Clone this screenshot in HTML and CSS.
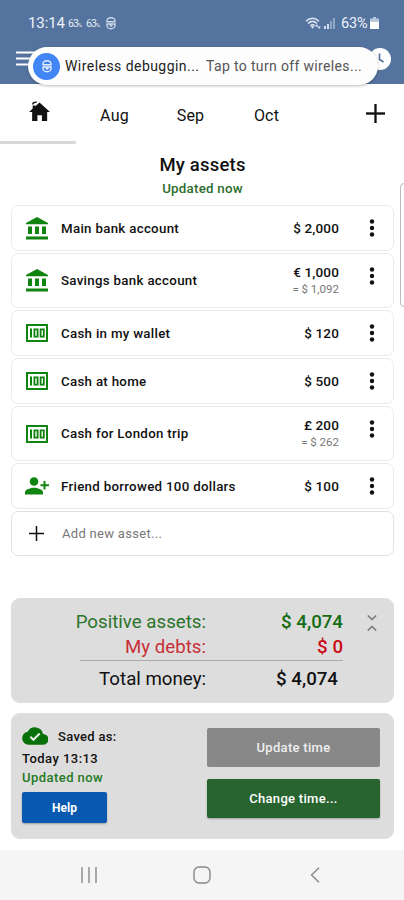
FILE: index.html
```html
<!DOCTYPE html>
<html lang="en">
<head>
<meta charset="utf-8">
<title>My assets</title>
<link rel="stylesheet" href="styles.css">
</head>
<body>
<svg class="defs" aria-hidden="true">
  <symbol id="bank" viewBox="0 0 22 23"><path d="M0 7.200V6L11 0l11 6v1.200zM2 9.500h4v7.500H2zM9 9.500h4v7.500H9zM16 9.500h4v7.500h-4zM0 19.500h22V22.500H0z"/></symbol>
  <symbol id="cash" viewBox="0 0 22 18"><path fill-rule="evenodd" d="M0 0h22v18H0zM2 2v14h18V2zM4 4.500h2v9H4zM7.500 4.500h5v9h-5zM9.300 6.300v5.400h1.400V6.300zM13.700 4.500h5v9h-5zM15.500 6.300v5.400h1.400V6.300z"/></symbol>
  <symbol id="friend" viewBox="0 0 24 18"><circle cx="9" cy="4.500" r="4.300"/><path d="M0 17.500v-2.200c0-3 6-4.600 9-4.600s9 1.600 9 4.600v2.200zM18.500 4h2v3.200H24v2h-3.500v3.300h-2V9.200H15.500v-2h3z"/></symbol>
  <symbol id="dots" viewBox="0 0 6 18"><circle cx="3" cy="2.500" r="2.200"/><circle cx="3" cy="9" r="2.200"/><circle cx="3" cy="15.500" r="2.200"/></symbol>
  <symbol id="plus" viewBox="0 0 20 20"><path d="M9 0h2v9h9v2h-9v9H9v-9H0V9h9z"/></symbol>
  <symbol id="bug" viewBox="0 0 12 14"><path d="M2 5.800V4.800a4 3 0 0 1 8 0v1zM1.500 8H10v1.500a4 3.300 0 0 1-8 0V8M5.500 8v1.800h2" fill="none" stroke="currentColor" stroke-width="1.400"/></symbol>
</svg>

<header class="header">
  <div class="status">
    <span class="clock">13:14</span><span class="tiny">63<small>%</small></span><span class="tiny">63<small>%</small></span>
    <svg class="status-bug"><use href="#bug"/></svg>
    <svg class="wifi" viewBox="0 0 17 13"><g fill="none" stroke="#dce6f2" stroke-width="1.500"><path d="M1 4.200c4-4 9-4 13 0M3 6.500c3-2.800 6-2.800 9 0M5.200 8.700c1.500-1.300 3-1.300 4.600 0"/></g><path d="m5.800 9.800 1.700-1 1.700 1-1.700 2zM10 9.500l1.700-2.500 1.700 2.500zM12.500 9.500h3.400L14.200 12z" fill="#dce6f2"/></svg>
    <svg class="signal" viewBox="0 0 12 11"><path d="M0 8h2v3H0zM3 6h2v5H3z" fill="#d4dfed"/><path d="M6 3h2v8H6zM9 0h2v11H9z" fill="#91a9c8"/></svg>
    <span class="battery-text">63%</span>
    <svg class="battery" viewBox="0 0 9 12"><path d="M3 0h3v1.500h3v3H0v-3h3z" fill="#b7c7dc"/><path d="M0 4.500h9V12H0z" fill="#fff"/></svg>
  </div>
  <svg class="menu" viewBox="0 0 24 15"><path d="M0 1.500h24M0 7.500h24M0 13.500h24" stroke="#fff" stroke-width="1.800"/></svg>
  <svg class="time-icon" viewBox="0 0 22 22"><circle cx="11" cy="11" r="11" fill="#fff"/><path d="M10.500 5.500v6l4 2.500" fill="none" stroke="#54739e" stroke-width="1.700"/></svg>
  <div class="toast">
    <span class="toast-icon"><svg><use href="#bug"/></svg></span>
    <span class="toast-title">Wireless debuggin<i>...</i></span>
    <span class="toast-text">Tap to turn off wireles<i>...</i></span>
  </div>
</header>

<nav class="tabs">
  <div class="tab active"><svg class="home" viewBox="0 0 20 19"><path d="M10 1.500 20 10.500h-2.700V19h-5v-5.500H8V19H3V10.500H0z"/><path d="M3.500 8V4.200H6V6z"/><path d="M3.500 3.200C3.500.800 5.200 2 7.500.700" fill="none" stroke="#111" stroke-width="1.300"/></svg></div>
  <div class="tab">Aug</div>
  <div class="tab">Sep</div>
  <div class="tab">Oct</div>
  <svg class="tab-add"><use href="#plus"/></svg>
</nav>

<main>
  <h1>My assets</h1>
  <p class="updated">Updated now</p>
  <div class="drawer-edge"></div>

  <section class="assets">
    <div class="asset"><svg class="bank"><use href="#bank"/></svg><span class="name">Main bank account</span><span class="value">$ 2,000</span><svg class="dots"><use href="#dots"/></svg></div>
    <div class="asset tall"><svg class="bank"><use href="#bank"/></svg><span class="name">Savings bank account</span><span class="value">€ 1,000<small>= $ 1,092</small></span><svg class="dots"><use href="#dots"/></svg></div>
    <div class="asset"><svg class="cash"><use href="#cash"/></svg><span class="name">Cash in my wallet</span><span class="value">$ 120</span><svg class="dots"><use href="#dots"/></svg></div>
    <div class="asset"><svg class="cash"><use href="#cash"/></svg><span class="name">Cash at home</span><span class="value">$ 500</span><svg class="dots"><use href="#dots"/></svg></div>
    <div class="asset tall"><svg class="cash"><use href="#cash"/></svg><span class="name">Cash for London trip</span><span class="value">£ 200<small>= $ 262</small></span><svg class="dots"><use href="#dots"/></svg></div>
    <div class="asset"><svg class="friend"><use href="#friend"/></svg><span class="name">Friend borrowed 100 dollars</span><span class="value">$ 100</span><svg class="dots"><use href="#dots"/></svg></div>
    <div class="asset add"><svg class="add-icon"><use href="#plus"/></svg><span class="name">Add new asset...</span></div>
  </section>

  <section class="summary">
    <div class="sums">
      <div class="sum positive"><span>Positive assets:</span><b>$ 4,074</b></div>
      <div class="sum debts"><span>My debts:</span><b>$ 0</b></div>
      <div class="sum total"><span>Total money:</span><b>$ 4,074</b></div>
    </div>
    <svg class="collapse" viewBox="0 0 10 18"><path d="m.800 1.500 4.200 4 4.200-4M.800 16.500l4.200-4 4.200 4" fill="none" stroke="#777" stroke-width="1.600"/></svg>
  </section>

  <section class="saved">
    <div class="saved-info">
      <div class="saved-line"><svg viewBox="0 0 25 17"><path d="M20.200 6.500A7.900 7.900 0 0 0 5.500 4.300 6.400 6.400 0 0 0 6.300 17H20a5.200 5.200 0 0 0 .200-10.500z" fill="#087008"/><path d="m8 9.200 3 3 6-6" fill="none" stroke="#e4efe4" stroke-width="2"/></svg><span>Saved as:</span></div>
      <div class="saved-time">Today 13:13</div>
      <div class="saved-updated">Updated now</div>
      <button class="help">Help</button>
    </div>
    <div class="actions">
      <button class="update">Update time</button>
      <button class="change">Change time...</button>
    </div>
  </section>
</main>

<footer class="navbar">
  <svg class="recents" viewBox="0 0 16 16"><path d="M1 0v16M8 0v16M15 0v16"/></svg>
  <svg class="home-key" viewBox="0 0 18 18"><rect x="1" y="1" width="16" height="16" rx="5"/></svg>
  <svg class="back" viewBox="0 0 10 16"><path d="M9 .700 1.500 8 9 15.300"/></svg>
</footer>
</body>
</html>
```
FILE: styles.css
```css
* { box-sizing: border-box; }
body { margin: 0; width: 404px; height: 900px; overflow: hidden; background: #fff; color: #111; font-family: Roboto, sans-serif; display: flex; flex-direction: column; }
svg { flex: none; fill: currentColor; display: block; }
.defs { position: absolute; width: 0; height: 0; }
i { font-style: normal; }

.header { position: relative; height: 84px; flex: none; background: #54739e; color: #edf3fa; }
.status { display: flex; align-items: center; height: 46px; padding: 0 25px 0 28px; }
.clock { font-size: 15px; width: 36px; letter-spacing: -.1px; }
.tiny { font-size: 10.500px; width: 18px; padding-left: 4px; letter-spacing: -1px; white-space: nowrap; color: #e4ecf6; }
.tiny small { font-size: 6px; }
.status-bug { width: 12px; height: 14px; margin-left: 5px; color: #cbd9ea; }
.wifi { width: 17px; height: 13px; margin-left: auto; }
.signal { width: 12px; height: 11px; margin: 0 5px 0 2px; }
.battery-text { font-size: 14.500px; width: 28px; letter-spacing: -.2px; }
.battery { width: 9px; height: 12px; margin-left: 1px; }
.menu { position: absolute; left: 16px; top: 51px; width: 24px; height: 15px; }
.time-icon { position: absolute; left: 369px; top: 48px; width: 22px; height: 22px; }
.toast { position: absolute; left: 28px; top: 47px; width: 350px; height: 38px; border-radius: 19px; background: #fdfdfd; box-shadow: 0 1px 3px #0004; display: flex; align-items: center; padding: 0 5px; white-space: nowrap; }
.toast-icon { width: 27px; height: 27px; flex: none; border-radius: 50%; background: #4285f4; color: #e8f0ff; display: flex; align-items: center; justify-content: center; }
.toast-icon svg { width: 12px; height: 14px; }
.toast-title { width: 141px; margin-left: 5px; font-size: 14px; color: #222; letter-spacing: .45px; }
.toast-text { font-size: 14px; color: #555; letter-spacing: .35px; }

.tabs { display: flex; height: 60px; flex: none; font-size: 16px; letter-spacing: .2px; }
.tab { width: 76px; height: 60px; display: flex; align-items: center; justify-content: center; padding: 2px 0 0 1px; }
.active { border-bottom: 3px solid #d9d9d9; padding: 0 0 4px 2px; }
.home { width: 21px; height: 20px; }
.tab-add { width: 19px; height: 19px; margin: 20px 0 0 62px; stroke: #111; stroke-width: .4; }

main { flex: 1; position: relative; display: flex; flex-direction: column; padding: 0 10px 0 11px; }
h1 { margin: 8px 0 0; font-size: 18.500px; line-height: 26px; font-weight: 500; text-align: center; letter-spacing: .2px; }
.updated { margin: 3px 0 9px; font-size: 13.300px; line-height: 15px; font-weight: 500; text-align: center; color: #2c6e2c; letter-spacing: .25px; }
.drawer-edge { position: absolute; left: 400px; top: 39px; width: 8px; height: 124px; border: 1px solid #bbb; border-radius: 5px; }
.assets { display: flex; flex-direction: column; gap: 2px; }
.asset { display: flex; align-items: center; height: 46px; border: 1px solid #e9ebe9; border-radius: 7px; padding: 0 18px 0 14px; font-size: 13.300px; font-weight: 500; }
.tall { height: 55px; }
.bank, .cash { width: 22px; height: 23px; color: #108410; }
.cash { height: 18px; }
.friend { width: 24px; height: 18px; color: #108410; margin: 0 -1px; }
.name { flex: 1; margin-left: 13px; letter-spacing: .3px; white-space: nowrap; }
.value { text-align: right; font-size: 13.500px; line-height: 17px; letter-spacing: .15px; margin-right: 30px; }
.value small { display: block; font-size: 11.500px; font-weight: 400; color: #777; letter-spacing: 0; }
.dots { width: 6px; height: 18px; }
.tall .dots { margin-bottom: 10px; }
.add { height: 45px; border-color: #dfe2df; }
.add .name { font-weight: 400; font-size: 13px; color: #777; margin-left: 18px; }
.add-icon { width: 15px; height: 15px; margin-left: 3px; }

.summary { margin-top: 42px; height: 105px; border-radius: 9px; background: #ddd; display: flex; padding: 12px 17px 0 64px; }
.sums { width: 268px; }
.sum { display: grid; grid-template-columns: 131px 1fr; text-align: right; font-size: 18.700px; line-height: 25px; white-space: nowrap; }
.sum b { font-weight: 500; font-size: 18.700px; }
.positive { color: #2b742b; }
.positive b { color: #146c14; }
.debts { color: #c82f35; }
.debts b { color: #c90e14; }
.total { padding: 7px 5px 0 0; background: linear-gradient(#aaa, #aaa) 100% 0 / 263px 1px no-repeat; }
.collapse { width: 10px; height: 18px; margin: 4px 0 0 auto; }

.saved { margin-top: 10px; height: 126px; border-radius: 9px; background: #ddd; display: flex; justify-content: space-between; padding: 14px 14px 0 11px; font-size: 13px; font-weight: 500; letter-spacing: .3px; }
.saved-line { display: flex; align-items: center; height: 18px; }
.saved-line svg { width: 26px; height: 18px; margin-right: 10px; }
.saved-time { line-height: 21px; margin-top: 3px; letter-spacing: .45px; }
.saved-updated { line-height: 17px; letter-spacing: .45px; color: #257a25; }
button { display: block; border: 0; padding: 0; border-radius: 2px; color: #fff; font: 500 13px Roboto, sans-serif; letter-spacing: .3px; box-shadow: 0 1px 2px #0004; }
.help { width: 85px; height: 31px; margin: 6px 0 0; background: #0959b1; font-size: 12px; letter-spacing: 0; font-weight: 700; }
.actions { width: 173px; padding-top: 1px; }
.update { width: 173px; height: 39px; background: #888; box-shadow: none; color: #eee; margin-bottom: 12px; }
.change { width: 173px; height: 39px; background: #27642f; }

.navbar { position: relative; height: 50px; flex: none; background: #f5f5f5; display: flex; align-items: center; padding-left: 81px; }
.navbar svg { fill: none; stroke: #888; stroke-width: 1.400; }
.recents { width: 16px; height: 16px; }
.home-key { width: 18px; height: 18px; margin-left: 96px; }
.back { width: 10px; height: 16px; margin-left: 99px; }
```
